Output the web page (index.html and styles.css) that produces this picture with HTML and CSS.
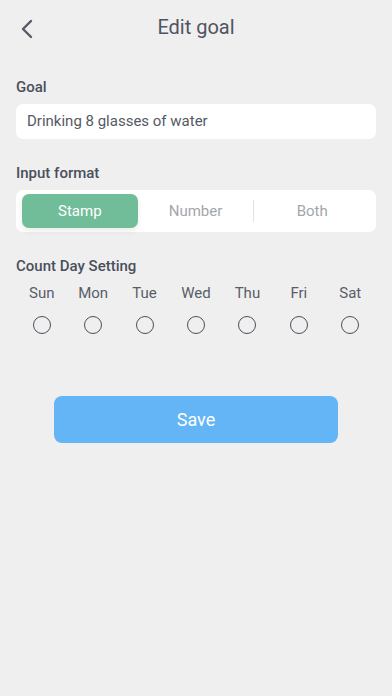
FILE: index.html
```html
<!DOCTYPE html>
<html lang="en">
<head>
    <meta charset="UTF-8">
    <meta name="viewport" content="width=device-width, initial-scale=1.0">
    <title>Edit goal</title>
    <link rel="stylesheet" href="styles.css">
</head>
<body>
    <div class="header">
        <button class="back" aria-label="Back">
            <svg width="14" height="20" viewBox="0 0 14 20">
                <path d="M11 2 L3 10 L11 18" fill="none" stroke="#555a66" stroke-width="2.4" stroke-linecap="round" stroke-linejoin="round"/>
            </svg>
        </button>
        <h1>Edit goal</h1>
    </div>

    <div class="content">
        <div class="label">Goal</div>
        <div class="text-input">Drinking 8 glasses of water</div>

        <div class="label">Input format</div>
        <div class="segments">
            <div class="segment active">Stamp</div>
            <div class="segment">Number</div>
            <div class="divider"></div>
            <div class="segment">Both</div>
        </div>

        <div class="label">Count Day Setting</div>
        <div class="days">
            <div class="day"><span>Sun</span><i class="radio"></i></div>
            <div class="day"><span>Mon</span><i class="radio"></i></div>
            <div class="day"><span>Tue</span><i class="radio"></i></div>
            <div class="day"><span>Wed</span><i class="radio"></i></div>
            <div class="day"><span>Thu</span><i class="radio"></i></div>
            <div class="day"><span>Fri</span><i class="radio"></i></div>
            <div class="day"><span>Sat</span><i class="radio"></i></div>
        </div>

        <button class="save">Save</button>
    </div>
</body>
</html>
```

FILE: styles.css
```css
body {
    margin: 0;
    background-color: #efefef;
    font-family: Roboto, "Noto Sans", sans-serif;
    color: #4a4f5c;
}
.header {
    height: 54px;
    display: flex;
    align-items: center;
    justify-content: center;
    position: relative;
}
.header h1 {
    margin: 0;
    font-size: 20px;
    font-weight: 400;
    color: #4f5461;
}
.back {
    position: absolute;
    left: 16px;
    top: 15px;
    background: none;
    border: none;
    padding: 4px;
    display: flex;
}
.content {
    padding: 21px 16px 0;
}
.label {
    font-size: 15px;
    font-weight: 500;
    color: #4a4f5c;
    line-height: 24px;
    margin-bottom: 5px;
}
.text-input {
    background-color: white;
    border-radius: 7px;
    height: 35px;
    line-height: 35px;
    padding: 0 11px;
    font-size: 15px;
    color: #555a64;
    margin-bottom: 22px;
}
.segments {
    background-color: white;
    border-radius: 7px;
    height: 42px;
    padding: 4px 6px;
    box-sizing: border-box;
    display: flex;
    align-items: center;
    margin-bottom: 22px;
}
.segment {
    flex: 1;
    height: 34px;
    line-height: 34px;
    text-align: center;
    font-size: 15px;
    color: #a3a6ab;
    border-radius: 7px;
}
.segment.active {
    background-color: #72bd99;
    color: white;
    box-shadow: 0 3px 6px rgba(0,0,0,0.08);
}
.divider {
    width: 1px;
    height: 22px;
    background-color: #e2e2e2;
}
.days {
    display: grid;
    grid-template-columns: repeat(7, 1fr);
}
.day {
    display: flex;
    flex-direction: column;
    align-items: center;
    gap: 13px;
    font-size: 15px;
    color: #585d68;
}
.day span {
    line-height: 20px;
}
.radio {
    width: 16px;
    height: 16px;
    border: 1.6px solid #4a4f5a;
    border-radius: 50%;
}
.save {
    display: block;
    margin: 62px auto 0;
    width: 284px;
    height: 47px;
    border: none;
    border-radius: 8px;
    background-color: #64b5f6;
    color: white;
    font-family: inherit;
    font-size: 18px;
}
```
